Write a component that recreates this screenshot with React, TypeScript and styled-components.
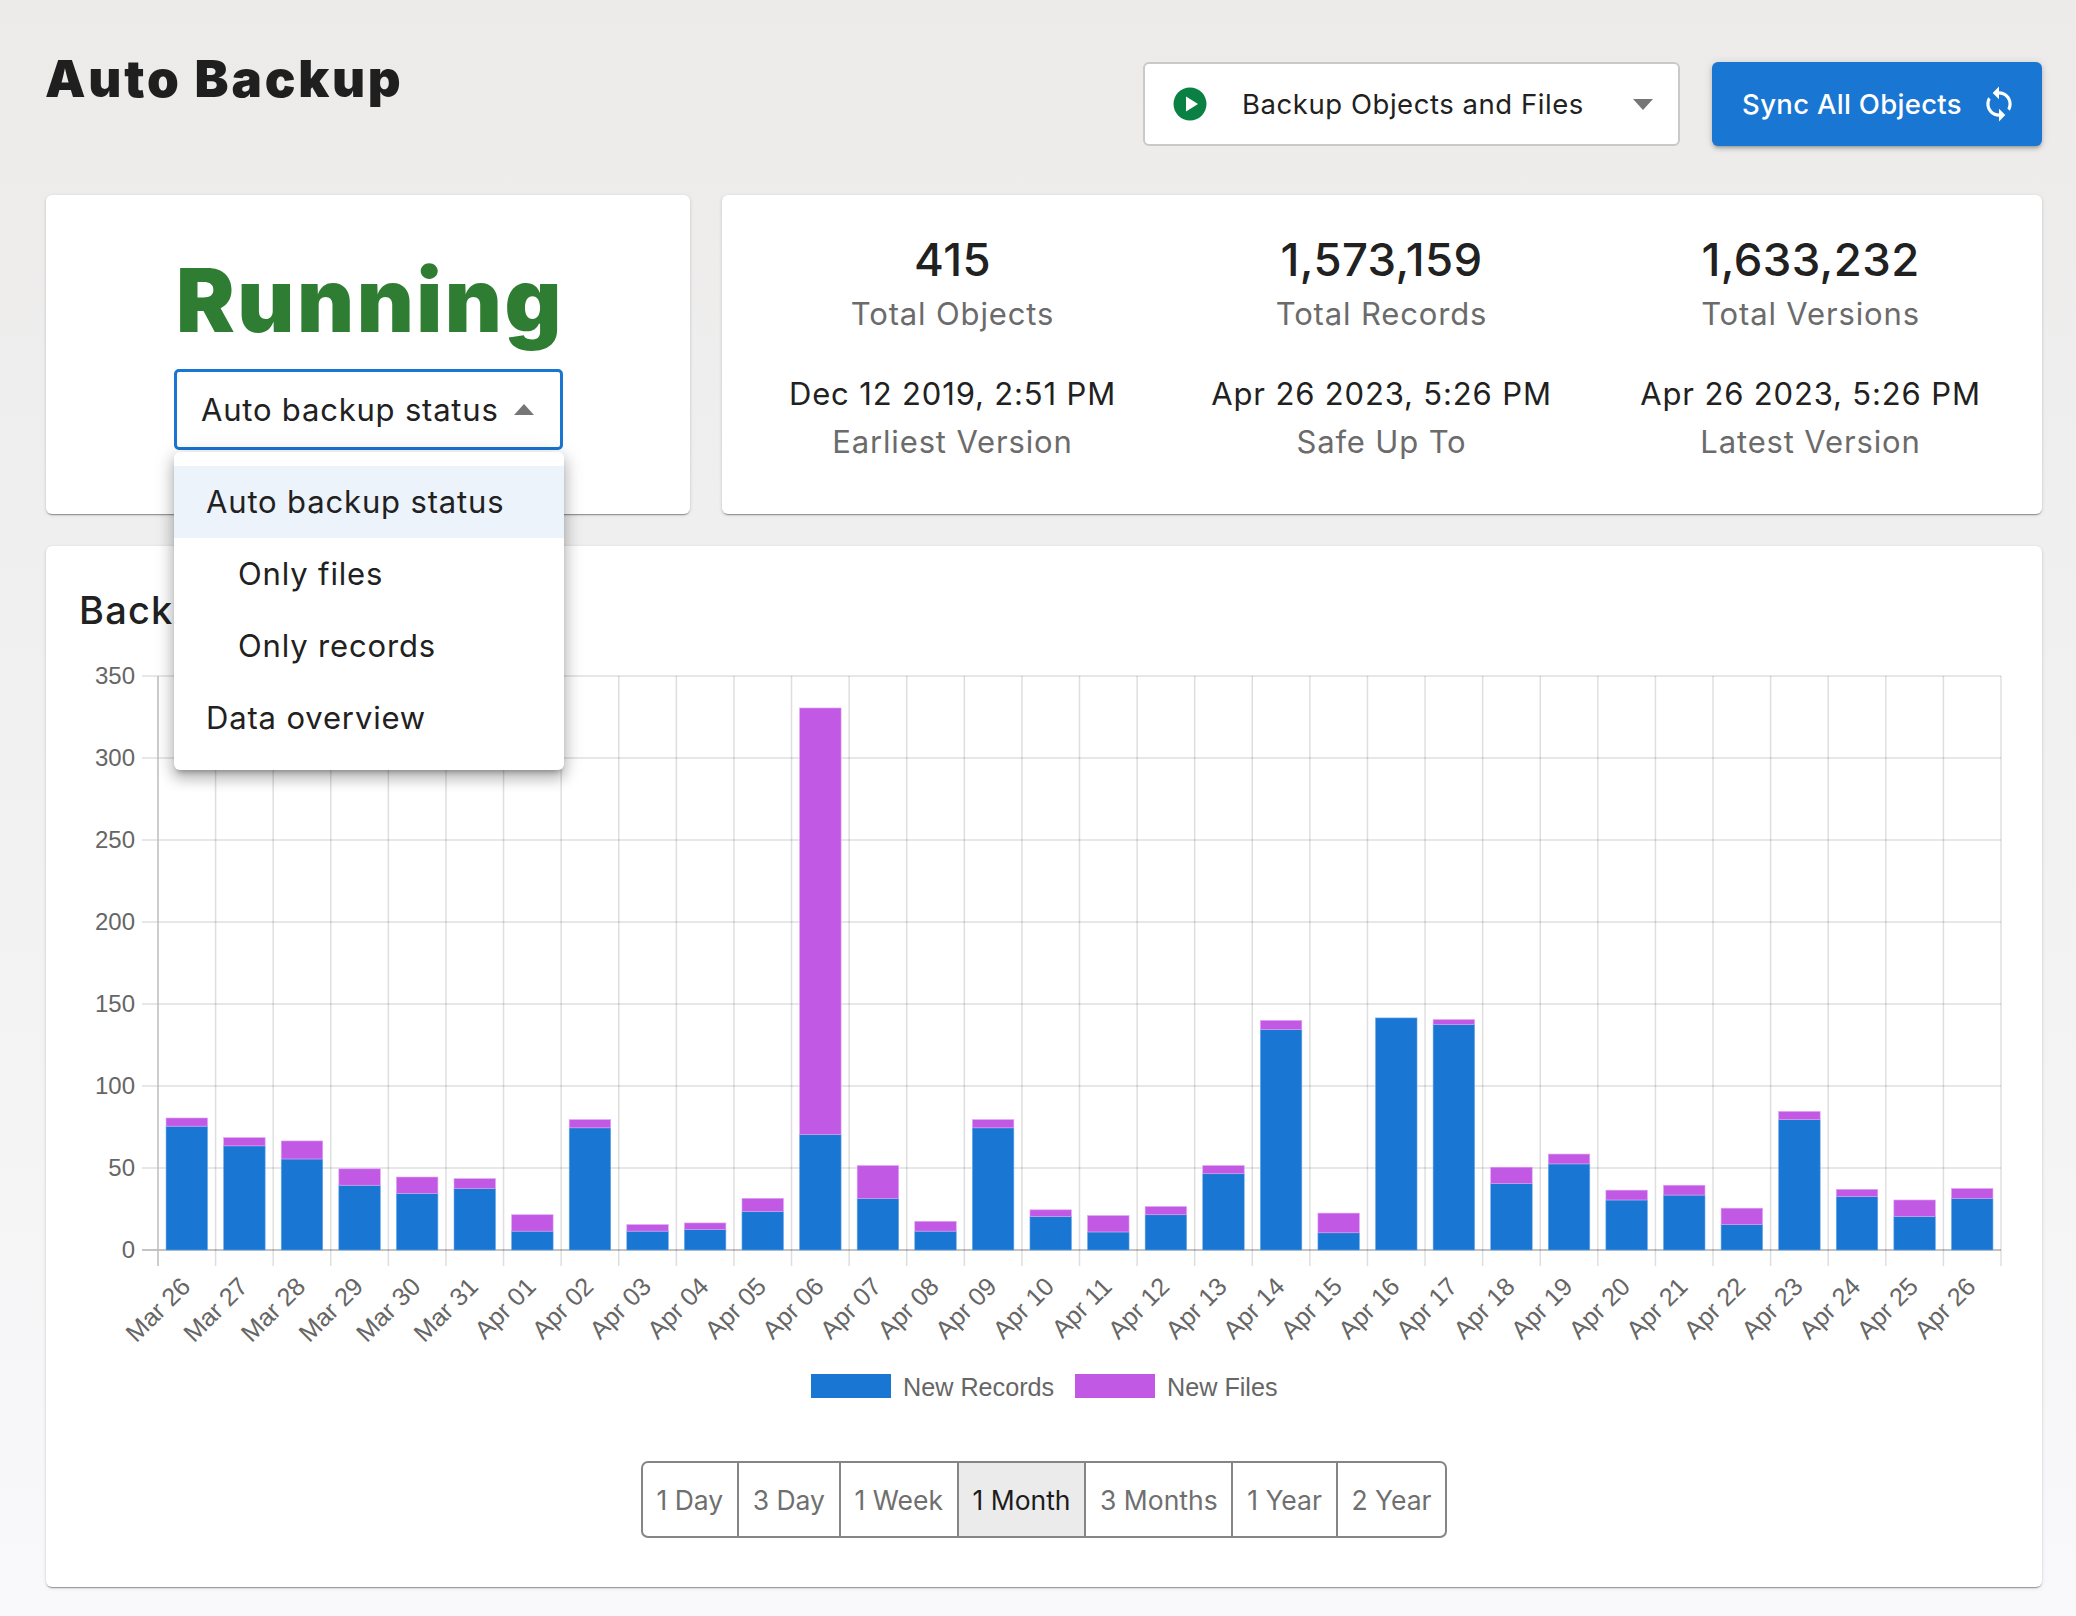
import React, { useState } from "react";
import styled, { createGlobalStyle } from "styled-components";

type Day = {
  label: string;
  records: number;
  files: number;
};

const days: Day[] = [
  { label: "Mar 26", records: 75.5, files: 5 },
  { label: "Mar 27", records: 63.5, files: 5 },
  { label: "Mar 28", records: 55.5, files: 11 },
  { label: "Mar 29", records: 39.5, files: 10 },
  { label: "Mar 30", records: 34.5, files: 10 },
  { label: "Mar 31", records: 37.5, files: 6 },
  { label: "Apr 01", records: 11.5, files: 10 },
  { label: "Apr 02", records: 74.5, files: 5 },
  { label: "Apr 03", records: 11.5, files: 4 },
  { label: "Apr 04", records: 12.5, files: 4 },
  { label: "Apr 05", records: 23.5, files: 8 },
  { label: "Apr 06", records: 70.5, files: 260 },
  { label: "Apr 07", records: 31.5, files: 20 },
  { label: "Apr 08", records: 11.5, files: 6 },
  { label: "Apr 09", records: 74.5, files: 5 },
  { label: "Apr 10", records: 20.5, files: 4 },
  { label: "Apr 11", records: 11, files: 10 },
  { label: "Apr 12", records: 21.5, files: 5 },
  { label: "Apr 13", records: 46.5, files: 5 },
  { label: "Apr 14", records: 134.5, files: 5.5 },
  { label: "Apr 15", records: 10.5, files: 12 },
  { label: "Apr 16", records: 141.5, files: 0 },
  { label: "Apr 17", records: 137.5, files: 3 },
  { label: "Apr 18", records: 40.5, files: 10 },
  { label: "Apr 19", records: 52.5, files: 6 },
  { label: "Apr 20", records: 30.5, files: 6 },
  { label: "Apr 21", records: 33.5, files: 6 },
  { label: "Apr 22", records: 15.5, files: 10 },
  { label: "Apr 23", records: 79.5, files: 5 },
  { label: "Apr 24", records: 32.5, files: 4.5 },
  { label: "Apr 25", records: 20.5, files: 10 },
  { label: "Apr 26", records: 31.5, files: 6 },
];

const stats = [
  { value: "415", label: "Total Objects", big: true },
  { value: "1,573,159", label: "Total Records", big: true },
  { value: "1,633,232", label: "Total Versions", big: true },
  { value: "Dec 12 2019, 2:51 PM", label: "Earliest Version", big: false },
  { value: "Apr 26 2023, 5:26 PM", label: "Safe Up To", big: false },
  { value: "Apr 26 2023, 5:26 PM", label: "Latest Version", big: false },
];

const ranges = ["1 Day", "3 Day", "1 Week", "1 Month", "3 Months", "1 Year", "2 Year"];

const BLUE = "#1976d2";
const PURPLE = "#c259e5";

const GlobalStyle = createGlobalStyle`
  html, body {
    margin: 0;
    padding: 0;
  }
  body {
    font-family: Inter, "Liberation Sans", sans-serif;
    color: #212121;
  }
`;

const Page = styled.div`
  box-sizing: border-box;
  width: 2076px;
  height: 1616px;
  padding: 0 34px 0 46px;
  background: linear-gradient(180deg, #ecebea 0%, #f9f8fa 100%);
  overflow: hidden;
`;

const Header = styled.header`
  display: flex;
  align-items: flex-start;
  justify-content: space-between;
  height: 195px;
  box-sizing: border-box;
  padding-top: 44px;
`;

const Title = styled.h1`
  margin: 0 0 0 -1px;
  font-size: 51px;
  line-height: 70px;
  font-weight: 900;
  letter-spacing: 2.8px;
  color: #1f1f1f;
`;

const Actions = styled.div`
  display: flex;
  gap: 32px;
  margin-top: 18px;
`;

const ModeSelect = styled.div`
  box-sizing: border-box;
  display: flex;
  align-items: center;
  width: 537px;
  height: 84px;
  padding: 0 25px 0 28px;
  background: #fff;
  border: 2px solid #c9c9c9;
  border-radius: 6px;
  font-size: 27.5px;
  letter-spacing: 0.55px;
`;

const ModeText = styled.span`
  flex: 1;
  margin-left: 35px;
`;

const SyncButton = styled.button`
  display: flex;
  align-items: center;
  justify-content: center;
  gap: 18px;
  width: 330px;
  height: 84px;
  padding: 0 0 0 6px;
  border: none;
  border-radius: 6px;
  background: ${BLUE};
  color: #fff;
  font: 500 27.5px Inter, sans-serif;
  letter-spacing: 0.3px;
  box-shadow: 0 3px 3px -2px rgba(0, 0, 0, 0.2), 0 3px 4px rgba(0, 0, 0, 0.14), 0 1px 8px rgba(0, 0, 0, 0.12);
`;

const TopRow = styled.section`
  display: grid;
  grid-template-columns: 644px 1320px;
  gap: 32px;
  height: 319px;
`;

const Card = styled.div`
  position: relative;
  background: #fff;
  border-radius: 6px;
  box-shadow: 0 2px 1px -1px rgba(0, 0, 0, 0.28), 0 1px 2px rgba(0, 0, 0, 0.14), 0 1px 4px rgba(0, 0, 0, 0.1);
`;

const StatusCard = styled(Card)`
  display: flex;
  flex-direction: column;
  align-items: center;
  padding-left: 1px;
`;

const StatusText = styled.div`
  margin: 45px 0 0 3px;
  height: 129px;
  font-size: 88px;
  line-height: 120px;
  font-weight: 900;
  letter-spacing: 2.5px;
  color: #2e7d32;
`;

const StatusSelect = styled.div`
  box-sizing: border-box;
  display: flex;
  align-items: center;
  justify-content: space-between;
  width: 389px;
  height: 81px;
  padding: 0 26px 0 24px;
  border: 3px solid ${BLUE};
  border-radius: 5px;
  font-size: 31px;
  letter-spacing: 0.8px;
`;

const Menu = styled.ul`
  position: absolute;
  z-index: 5;
  left: 128px;
  top: 257px;
  width: 390px;
  margin: 0;
  padding: 14px 0 16px;
  list-style: none;
  background: #fff;
  border-radius: 6px;
  box-shadow: 0 5px 5px -3px rgba(0, 0, 0, 0.25), 0 8px 14px 1px rgba(0, 0, 0, 0.2), 0 3px 20px 2px rgba(0, 0, 0, 0.14);
`;

const MenuItem = styled.li<{ $nested?: boolean; $active?: boolean }>`
  box-sizing: border-box;
  height: 72px;
  padding-left: ${(p) => (p.$nested ? 64 : 32)}px;
  line-height: 72px;
  font-size: 31px;
  letter-spacing: 0.85px;
  background: ${(p) => (p.$active ? "#edf3fb" : "transparent")};
`;

const StatsCard = styled(Card)`
  display: grid;
  grid-template-columns: repeat(3, 1fr);
  grid-template-rows: 136px 129px;
  padding: 39px 17px 0 16px;
`;

const Stat = styled.div`
  display: flex;
  flex-direction: column;
  align-items: center;
`;

const StatValue = styled.div<{ $big: boolean }>`
  font-size: ${(p) => (p.$big ? 45.5 : 31)}px;
  font-weight: ${(p) => (p.$big ? 500 : 400)};
  line-height: ${(p) => (p.$big ? 52 : 48)}px;
  letter-spacing: ${(p) => (p.$big ? 0.4 : 0.85)}px;
`;

const StatLabel = styled.div<{ $big: boolean }>`
  margin-top: ${(p) => (p.$big ? 7 : 3)}px;
  font-size: 31px;
  line-height: 42px;
  letter-spacing: 0.85px;
  color: #6b6b6b;
`;

const ChartCard = styled(Card)`
  height: 1041px;
  margin-top: 32px;
  box-sizing: border-box;
  padding: 39px 33px 0;
`;

const ChartTitle = styled.h2`
  margin: 0;
  font-size: 38px;
  line-height: 50px;
  font-weight: 500;
  letter-spacing: 1.2px;
`;

const ChartFrame = styled.div`
  margin: 21px 0 0 -33px;
  height: 790px;
`;

const AxisText = styled.text`
  font-family: "Liberation Sans", Arial, sans-serif;
  font-size: 24px;
  fill: #666;
`;

const DayText = styled(AxisText)`
  font-size: 25.2px;
`;

const Range = styled.div`
  display: flex;
  justify-content: center;
  margin-top: 15px;
`;

const RangeButton = styled.button<{ $active: boolean }>`
  height: 77px;
  padding: 0 13.75px;
  border: 2px solid #858585;
  border-left-width: 0;
  background: ${(p) => (p.$active ? "#ebebeb" : "#fff")};
  color: ${(p) => (p.$active ? "#1c1c1c" : "#6f6f6f")};
  font: 400 26.5px Inter, sans-serif;

  &:first-child {
    border-left-width: 2px;
    border-radius: 7px 0 0 7px;
  }
  &:last-child {
    border-radius: 0 7px 7px 0;
  }
`;

const Caret = ({ up }: { up?: boolean }) => (
  <svg width="20" height="11" viewBox="0 0 20 11">
    <path d={up ? "M0 11 L10 0 L20 11 Z" : "M0 0 L10 11 L20 0 Z"} fill="#767676" />
  </svg>
);

const PlayIcon = () => (
  <svg width="34" height="34" viewBox="0 0 34 34">
    <circle cx="17" cy="17" r="16.5" fill="#0b8043" />
    <path d="M13 9.5 L25 17 L13 24.5 Z" fill="#fff" />
  </svg>
);

const SyncIcon = () => (
  <svg width="38" height="38" viewBox="0 0 24 24" fill="#fff">
    <path d="M12 4V1L8 5l4 4V6c3.31 0 6 2.69 6 6 0 1.01-.25 1.97-.7 2.8l1.46 1.46C19.54 15.03 20 13.57 20 12c0-4.42-3.58-8-8-8zm0 14c-3.31 0-6-2.69-6-6 0-1.01.25-1.97.7-2.8L5.24 7.74C4.46 8.97 4 10.43 4 12c0 4.42 3.58 8 8 8v3l4-4-4-4v3z" />
  </svg>
);

// chart is drawn by hand, same numbers as chart.js would put out
const BarChart = () => {
  const left = 112;
  const right = 1955;
  const top = 20;
  const bottom = 594;
  const step = (right - left) / days.length;
  const barWidth = 41.5;
  const grid = "rgba(0, 0, 0, 0.13)";
  const y = (v: number) => bottom - (v / 350) * (bottom - top);
  const ticks = [0, 50, 100, 150, 200, 250, 300, 350];

  return (
    <svg width="1996" height="790" viewBox="0 0 1996 790">
      {ticks.map((t) => (
        <g key={t}>
          <line
            x1={left - 16}
            x2={right}
            y1={y(t)}
            y2={y(t)}
            stroke={t === 0 ? "#c4c4c4" : grid}
            strokeWidth={t === 0 ? 2 : 1.5}
          />
          <AxisText x={left - 23} y={y(t) + 8} textAnchor="end">
            {t}
          </AxisText>
        </g>
      ))}
      {days.map((_, i) => (
        <line
          key={i}
          x1={left + i * step}
          x2={left + i * step}
          y1={top}
          y2={bottom + 16}
          stroke={i === 0 ? "#bdbdbd" : grid}
          strokeWidth={1.5}
        />
      ))}
      <line x1={right} x2={right} y1={top} y2={bottom + 16} stroke={grid} strokeWidth={1.5} />
      {days.map((d, i) => {
        const x = left + i * step + (step - barWidth) / 2;
        const labelX = left + i * step + step / 2 + 5;
        const labelY = bottom + 38;
        return (
          <g key={d.label}>
            <rect
              x={x}
              y={y(d.records)}
              width={barWidth}
              height={bottom - y(d.records)}
              fill={BLUE}
              stroke="#6aa9e8"
              strokeWidth={0.6}
            />
            {d.files > 0 && (
              <rect
                x={x}
                y={y(d.records + d.files)}
                width={barWidth}
                height={y(d.records) - y(d.records + d.files)}
                fill={PURPLE}
                stroke="#dfa6f2"
                strokeWidth={0.6}
              />
            )}
            <DayText x={labelX} y={labelY} textAnchor="end" transform={`rotate(-45 ${labelX} ${labelY})`}>
              {d.label}
            </DayText>
          </g>
        );
      })}
      <rect x="765" y="718" width="80" height="24" fill={BLUE} />
      <DayText x="857" y="740">New Records</DayText>
      <rect x="1029" y="718" width="80" height="24" fill={PURPLE} />
      <DayText x="1121" y="740">New Files</DayText>
    </svg>
  );
};

function App() {
  const [range, setRange] = useState("1 Month");

  return (
    <Page>
      <GlobalStyle />
      <Header>
        <Title>Auto Backup</Title>
        <Actions>
          <ModeSelect>
            <PlayIcon />
            <ModeText>Backup Objects and Files</ModeText>
            <Caret />
          </ModeSelect>
          <SyncButton>
            Sync All Objects
            <SyncIcon />
          </SyncButton>
        </Actions>
      </Header>
      <TopRow>
        <StatusCard>
          <StatusText>Running</StatusText>
          <StatusSelect>
            Auto backup status
            <Caret up />
          </StatusSelect>
          <Menu>
            <MenuItem $active>Auto backup status</MenuItem>
            <MenuItem $nested>Only files</MenuItem>
            <MenuItem $nested>Only records</MenuItem>
            <MenuItem>Data overview</MenuItem>
          </Menu>
        </StatusCard>
        <StatsCard>
          {stats.map((s) => (
            <Stat key={s.label}>
              <StatValue $big={s.big}>{s.value}</StatValue>
              <StatLabel $big={s.big}>{s.label}</StatLabel>
            </Stat>
          ))}
        </StatsCard>
      </TopRow>
      <ChartCard>
        <ChartTitle>Backup Activity</ChartTitle>
        <ChartFrame>
          <BarChart />
        </ChartFrame>
        <Range>
          {ranges.map((r) => (
            <RangeButton key={r} $active={r === range} onClick={() => setRange(r)}>
              {r}
            </RangeButton>
          ))}
        </Range>
      </ChartCard>
    </Page>
  );
}

export default App;
